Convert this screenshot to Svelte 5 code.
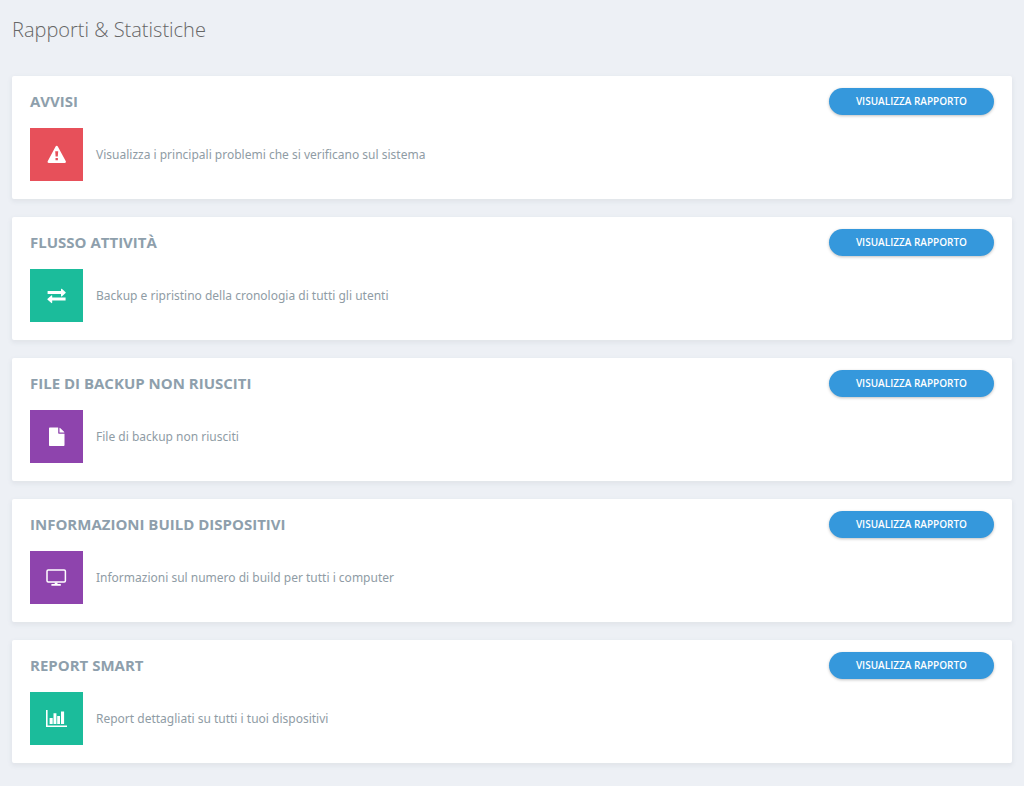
<script>
  const reports = [
    {
      id: "alerts",
      title: "Avvisi",
      description: "Visualizza i principali problemi che si verificano sul sistema",
      icon: "warning",
      color: "red",
    },
    {
      id: "activity",
      title: "Flusso attività",
      description: "Backup e ripristino della cronologia di tutti gli utenti",
      icon: "exchange",
      color: "green",
    },
    {
      id: "failed-files",
      title: "File di backup non riusciti",
      description: "File di backup non riusciti",
      icon: "file",
      color: "purple",
    },
    {
      id: "build-info",
      title: "Informazioni build dispositivi",
      description: "Informazioni sul numero di build per tutti i computer",
      icon: "monitor",
      color: "purple",
    },
    {
      id: "smart",
      title: "Report SMART",
      description: "Report dettagliati su tutti i tuoi dispositivi",
      icon: "chart",
      color: "green",
    },
  ];

  let selected = $state(null);

  const openReport = (id) => {
    selected = id;
  };
</script>

<main>
  <h1>Rapporti &amp; Statistiche</h1>

  <div class="reports">
    {#each reports as report (report.id)}
      <section class="card" aria-labelledby={report.id}>
        <header>
          <h2 id={report.id}>{report.title}</h2>
          <button
            type="button"
            aria-pressed={selected === report.id}
            onclick={() => openReport(report.id)}>Visualizza rapporto</button
          >
        </header>
        <div class="body">
          <div class="tile {report.color}">
            <svg viewBox="0 0 21 21" aria-hidden="true">
              {#if report.icon === "warning"}
                <path
                  fill-rule="evenodd"
                  d="M9.6 2.4c.5-.9 1.7-.9 2.2 0l8 14.9c.4.8-.1 1.7-1.1 1.7H2.8c-1 0-1.5-.9-1.1-1.7zM9.2 7.2l.4 5.4h2.2l.4-5.4zM9.5 13.9v2.4h2.4v-2.4z"
                />
              {:else if report.icon === "exchange"}
                <path
                  d="M1.6 6.1H15V4.2c0-.5.5-.7.8-.4l3.8 3.4c.3.3.3.6 0 .9l-3.8 3.3c-.3.3-.8.1-.8-.4V9.1H1.6zM19.6 12.6H6.2v-1.8c0-.5-.5-.7-.8-.4l-3.8 3.4c-.3.3-.3.6 0 .9l3.8 3.3c.3.3.8.1.8-.4v-2h13.4z"
                />
              {:else if report.icon === "file"}
                <path
                  d="M4 1.5h8.2v5.3c0 .6.4 1 1 1h5.3v11.1c0 .6-.4 1-1 1H4c-.6 0-1-.4-1-1V2.5c0-.6.4-1 1-1zM13.5 1.7c.4.1.7.3.9.5l3.4 3.4c.3.3.5.6.6.9h-4.9z"
                />
              {:else if report.icon === "monitor"}
                <rect class="line" x="1" y="3" width="18.4" height="12" rx="1.2" />
                <path d="M8.7 15.5h2.8v1.6h3.3v1.7H5.4v-1.7h3.3z" />
              {:else}
                <path
                  d="M0 2h1.6v15.4H21V19H0zM3.6 10h3.1v6H3.6zM7.5 5.3h2.9V16H7.5zM11.2 8h2.8v8h-2.8zM15 3.6h3.1V16H15z"
                />
              {/if}
            </svg>
          </div>
          <p>{report.description}</p>
        </div>
      </section>
    {/each}
  </div>
</main>

<style>
  :global(body) {
    margin: 0;
    background: #edf0f5;
  }
  main {
    padding: 14px 12px 24px;
    font-family: "Open Sans", "Noto Sans", sans-serif;
  }
  h1 {
    margin: 0 0 30px;
    color: #666;
    font-size: 20px;
    font-weight: 300;
    line-height: 32px;
  }
  .reports {
    display: flex;
    flex-direction: column;
    gap: 18px;
  }
  .card {
    padding: 12px 18px 18px;
    background: #fff;
    border-radius: 2px;
    box-shadow: 0 2px 4px 1px rgba(90, 100, 120, 0.08);
  }
  header {
    display: flex;
    align-items: center;
    justify-content: space-between;
    margin-bottom: 13px;
  }
  h2 {
    margin: 0;
    color: #8e9fac;
    font-size: 15px;
    font-weight: 700;
    line-height: 27px;
    text-transform: uppercase;
  }
  button {
    height: 27px;
    padding: 0 27px;
    border: 0;
    border-radius: 14px;
    background: #3598dc;
    box-shadow: 0 1px 3px rgba(0, 0, 0, 0.25);
    color: #fff;
    font-family: inherit;
    font-size: 10px;
    font-weight: 600;
    line-height: 27px;
    text-transform: uppercase;
    cursor: pointer;
  }
  button:hover {
    background: #217ebd;
  }
  .body {
    display: flex;
    align-items: center;
    gap: 13px;
  }
  .tile {
    display: flex;
    flex: none;
    align-items: center;
    justify-content: center;
    width: 53px;
    height: 53px;
  }
  .red {
    background: #e7505a;
  }
  .green {
    background: #1bbc9b;
  }
  .purple {
    background: #8e44ad;
  }
  svg {
    width: 21px;
    height: 21px;
    fill: #fff;
  }
  .line {
    fill: none;
    stroke: #fff;
    stroke-width: 1.5;
  }
  p {
    margin: 0;
    color: #8f9ca5;
    font-family: "Noto Sans", "Open Sans", sans-serif;
    font-size: 12px;
    line-height: 18px;
  }
</style>
